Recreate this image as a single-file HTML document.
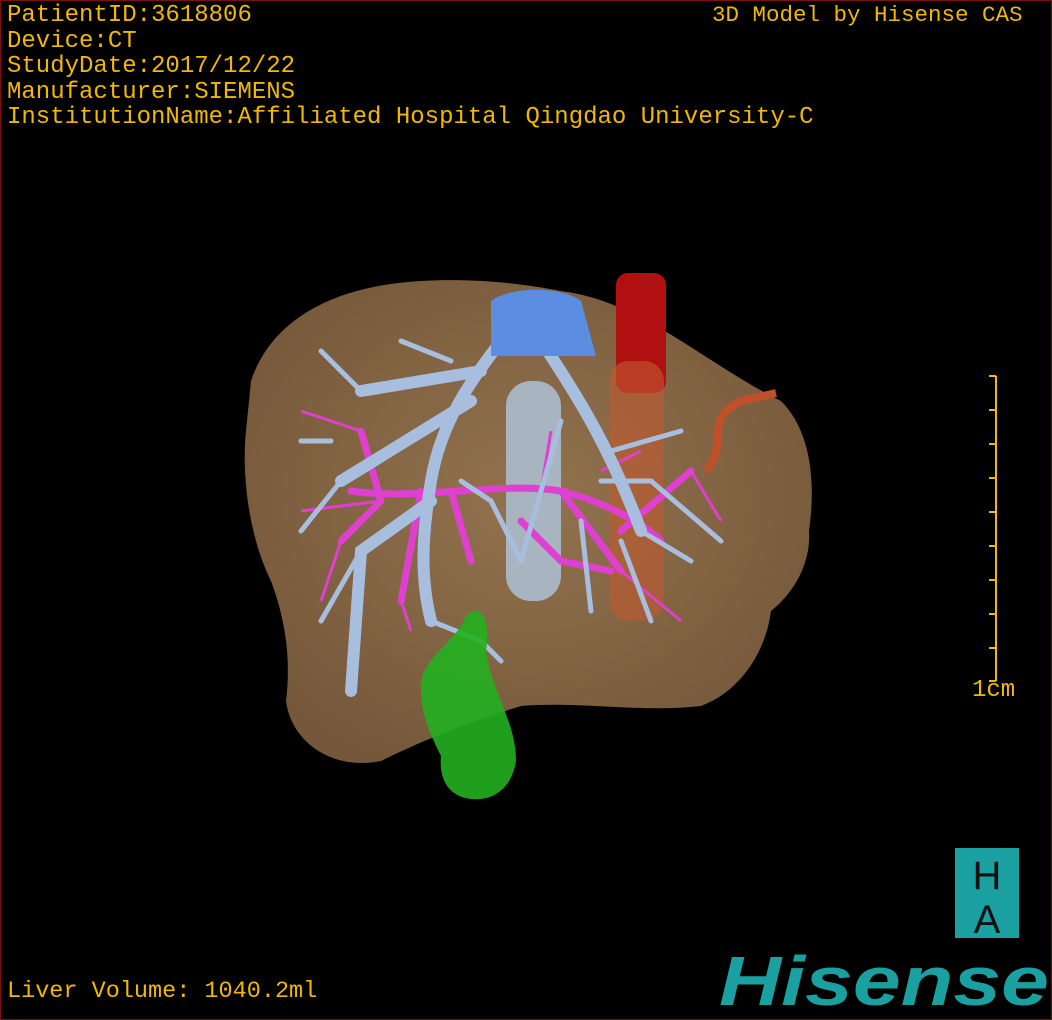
<!DOCTYPE html>
<html><head><meta charset="utf-8"><style>
html,body{margin:0;padding:0;background:#000}
#c{position:relative;width:1050px;height:1018px;border:1px solid #7a1010;background:#000;overflow:hidden;font-family:"Liberation Mono","DejaVu Sans Mono",monospace;color:#f0b800}
.t{position:absolute;font-size:24px;line-height:25.6px;white-space:pre}
</style></head><body><div id="c">
<svg width="1050" height="1018" style="position:absolute;left:0;top:0">
<defs><radialGradient id="lg" cx="50%" cy="45%" r="60%"><stop offset="0" stop-color="#93734e"/><stop offset="1" stop-color="#75583a"/></radialGradient></defs>
<path d="M250 380 C270 320 330 285 420 280 C470 277 520 282 560 290 C640 300 700 360 780 400 C810 430 815 480 808 530 C810 560 795 590 770 610 C765 650 740 690 700 705 C640 712 580 700 520 705 C470 720 420 740 380 760 C330 770 290 740 285 700 C290 660 285 620 270 580 C250 540 240 480 245 430 Z" fill="url(#lg)"/>
<rect x="615" y="272" width="50" height="120" rx="12" fill="#b01010"/>
<rect x="608" y="360" width="55" height="260" rx="20" fill="#c05a30" opacity="0.6"/>
<path d="M705 470 C730 440 700 420 740 400 L775 392" stroke="#c0502a" stroke-width="8" fill="none"/>
<rect x="505" y="380" width="55" height="220" rx="25" fill="#a8b4c0"/>
<g stroke="#e040d0" stroke-width="7" fill="none" stroke-linecap="round">
<path d="M350 490 C420 500 500 480 560 490 C600 500 640 520 660 540"/>
<path d="M380 500 L340 540 M380 500 L360 430 M420 490 L400 600 M560 490 L620 570 M520 520 L560 560 L610 570 M620 530 L690 470 M450 490 L470 560"/>
</g>
<g stroke="#e040d0" stroke-width="3" fill="none">
<path d="M340 540 L320 600 M360 430 L300 410 M400 600 L410 630 M620 570 L680 620 M690 470 L720 520 M300 510 L380 500 M550 430 L540 490 M600 470 L640 450"/>
</g>
<g stroke="#a8bedf" stroke-width="12" fill="none" stroke-linecap="round">
<path d="M500 340 C470 380 440 420 430 480 C420 540 420 580 430 620"/>
<path d="M540 340 C580 400 610 450 640 530"/>
<path d="M480 370 L360 390 M470 400 L340 480 M430 500 L360 550 L350 690"/>
</g>
<g stroke="#a8bedf" stroke-width="5" fill="none" stroke-linecap="round">
<path d="M360 390 L320 350 M340 480 L300 530 M360 550 L320 620 M430 620 L480 640 L500 660 M640 530 L690 560 M610 450 L680 430 M560 420 L520 560 M600 480 L650 480 L720 540 M330 440 L300 440 M400 340 L450 360 M460 480 L490 500 L520 560 M620 540 L650 620 M580 520 L590 610"/>
</g>
<path d="M490 300 C510 285 560 285 580 300 L595 355 L490 355 Z" fill="#5b8ee0"/>
<path d="M420 680 C425 655 455 640 465 615 C480 600 490 620 485 650 C490 690 515 720 515 760 C510 790 490 800 470 798 C445 795 438 775 440 755 C430 735 418 710 420 680 Z" fill="#22b020" opacity="0.9"/>
<g stroke="#f0b800" stroke-width="2"><line x1="995" y1="375" x2="995" y2="680"/>
<line x1="988" y1="375" x2="995" y2="375"/><line x1="988" y1="409" x2="995" y2="409"/><line x1="988" y1="443" x2="995" y2="443"/><line x1="988" y1="477" x2="995" y2="477"/><line x1="988" y1="511" x2="995" y2="511"/><line x1="988" y1="545" x2="995" y2="545"/><line x1="988" y1="579" x2="995" y2="579"/><line x1="988" y1="613" x2="995" y2="613"/><line x1="988" y1="647" x2="995" y2="647"/><line x1="988" y1="680" x2="995" y2="680"/></g>
<rect x="954" y="847" width="64" height="90" fill="#1aa0a0"/>
<text x="986" y="888" text-anchor="middle" font-family="Liberation Sans,sans-serif" font-size="40" fill="#111">H</text>
<text x="986" y="932" text-anchor="middle" font-family="Liberation Sans,sans-serif" font-size="40" fill="#111">A</text>
<text x="718" y="1004" font-family="Liberation Sans,sans-serif" font-weight="bold" font-style="italic" font-size="70" fill="#1aa0a0" textLength="330" lengthAdjust="spacingAndGlyphs">Hisense</text>
</svg>
<div class="t" style="left:6px;top:2px">PatientID:3618806
Device:CT
StudyDate:2017/12/22
Manufacturer:SIEMENS
InstitutionName:Affiliated Hospital Qingdao University-C</div>
<div class="t" style="left:711px;top:2px;font-size:22.5px">3D Model by Hisense CAS</div>
<div class="t" style="left:971px;top:677px">1cm</div>
<div class="t" style="left:6px;top:978px;font-size:23.5px">Liver Volume: 1040.2ml</div>
</div></body></html>
